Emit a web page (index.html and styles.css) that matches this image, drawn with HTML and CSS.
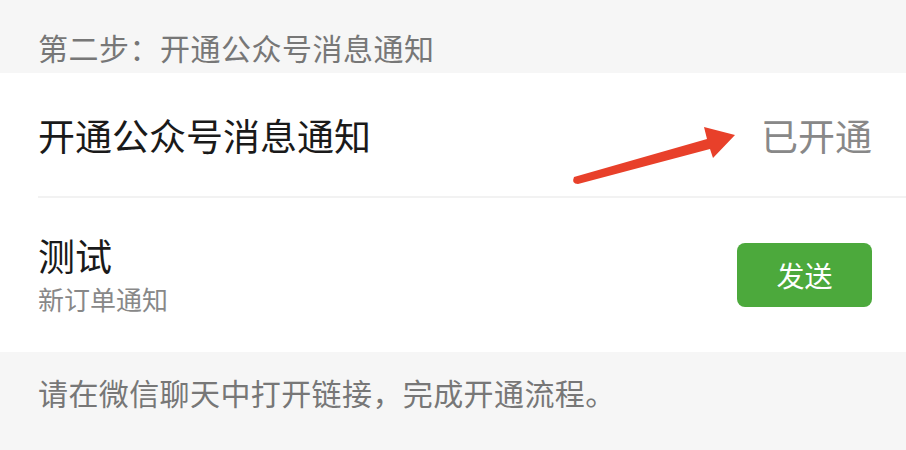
FILE: index.html
```html
<!DOCTYPE html>
<html lang="zh-CN">

<head>
    <meta charset="utf-8">
    <link rel="stylesheet" href="styles.css">
</head>

<body class="page">
    <div class="section-title">第二步：开通公众号消息通知</div>
    <div class="card">
        <div class="cell">
            <div class="cell-title">开通公众号消息通知</div>
            <div class="cell-value">已开通</div>
        </div>
        <div class="cell cell-test">
            <div>
                <div class="cell-title">测试</div>
                <div class="cell-desc">新订单通知</div>
            </div>
            <button class="button-send" type="button">发送</button>
        </div>
        <!-- arrow drawn over the first row -->
        <svg class="arrow" width="906" height="450" viewBox="0 0 906 450">
            <path d="M574 177 L707 139 L704 127 L735 135 L713 158 L710 149 L578 184 Q571 184 574 177 Z" fill="#e8402a" />
        </svg>
    </div>
    <div class="tip">请在微信聊天中打开链接，完成开通流程。</div>
</body>

</html>
```

FILE: styles.css
```css
.page {
    margin: 0;
    width: 906px;
    height: 450px;
    overflow: hidden;
    background-color: #f6f6f6;
    font-family: "Noto Sans CJK SC", "Noto Sans", sans-serif;
    position: relative;
}

.section-title {
    padding: 32px 38px 11px;
    font-size: 30px;
    line-height: 30px;
    letter-spacing: 0.5px;
    color: #777777;
}

.card {
    background-color: #ffffff;
}

.cell {
    display: flex;
    align-items: center;
    justify-content: space-between;
    margin-left: 38px;
    padding-right: 34px;
    height: 123px;
    border-bottom: 2px solid #f2f2f2;
}

.cell-test {
    height: 154px;
    border-bottom: none;
}

.cell-title {
    font-size: 37px;
    line-height: 40px;
    color: #1a1a1a;
}

.cell-value {
    font-size: 37px;
    line-height: 40px;
    color: #888888;
}

.cell-desc {
    margin-top: 8px;
    font-size: 26px;
    line-height: 32px;
    color: #888888;
}

.button-send {
    width: 135px;
    height: 64px;
    border: none;
    border-radius: 8px;
    background-color: #4ca93c;
    color: #ffffff;
    font-family: inherit;
    font-size: 28px;
    cursor: pointer;
}

.arrow {
    position: absolute;
    left: 0;
    top: 0;
    pointer-events: none;
}

.tip {
    padding: 25px 38px 0;
    font-size: 30px;
    line-height: 30px;
    letter-spacing: 0.4px;
    color: #777777;
}
```
